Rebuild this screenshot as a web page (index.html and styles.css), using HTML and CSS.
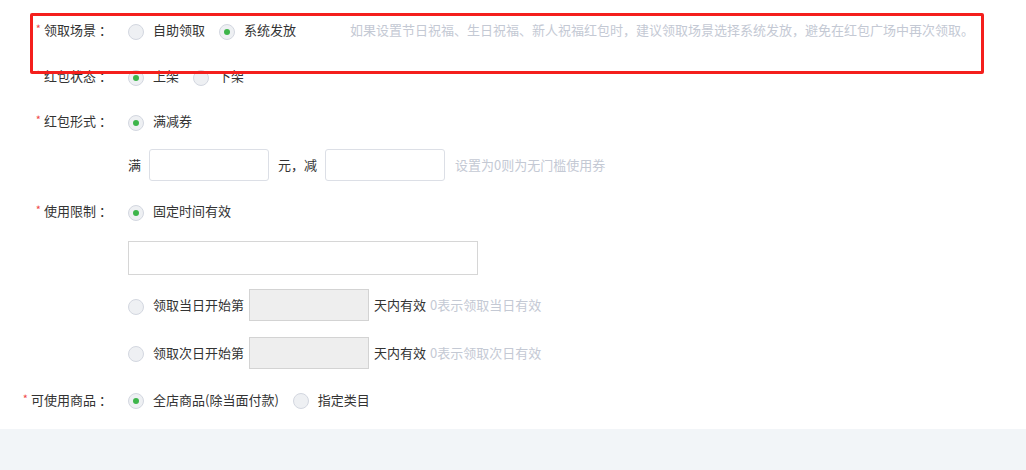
FILE: index.html
```html
<!DOCTYPE html>
<html lang="zh-CN">
<head>
<meta charset="utf-8">
<title>红包设置</title>
<link rel="stylesheet" href="styles.css">
</head>
<body>
<div class="page">
  <form class="form">
    <div class="row r1">
      <label class="label"><span class="req">*</span>领取场景<span class="colon">：</span></label>
      <div class="ctrl">
        <span class="radio"></span><span class="opt">自助领取</span>
        <span class="radio on"></span><span class="opt">系统发放</span>
        <span class="hint hint-wide">如果设置节日祝福、生日祝福、新人祝福红包时，建议领取场景选择系统发放，避免在红包广场中再次领取。</span>
      </div>
    </div>
    <div class="row r2">
      <label class="label"><span class="req">*</span>红包状态<span class="colon">：</span></label>
      <div class="ctrl">
        <span class="radio on"></span><span class="opt">上架</span>
        <span class="radio"></span><span class="opt">下架</span>
      </div>
    </div>
    <div class="row r3">
      <label class="label"><span class="req">*</span>红包形式<span class="colon">：</span></label>
      <div class="ctrl">
        <span class="radio on"></span><span class="opt">满减券</span>
      </div>
    </div>
    <div class="row r4">
      <span class="label"></span>
      <div class="ctrl">
        <span class="txt">满</span>
        <span class="input small"></span>
        <span class="txt mid">元，减</span>
        <span class="input small"></span>
        <span class="hint hint-after">设置为0则为无门槛使用券</span>
      </div>
    </div>
    <div class="row r5">
      <label class="label"><span class="req">*</span>使用限制<span class="colon">：</span></label>
      <div class="ctrl">
        <span class="radio on"></span><span class="opt">固定时间有效</span>
      </div>
    </div>
    <div class="row r6">
      <span class="label"></span>
      <div class="ctrl">
        <span class="input wide"></span>
      </div>
    </div>
    <div class="row r7">
      <span class="label"></span>
      <div class="ctrl">
        <span class="radio"></span><span class="opt tight">领取当日开始第</span>
        <span class="input grey"></span>
        <span class="txt after">天内有效</span>
        <span class="hint">0表示领取当日有效</span>
      </div>
    </div>
    <div class="row r8">
      <span class="label"></span>
      <div class="ctrl">
        <span class="radio"></span><span class="opt tight">领取次日开始第</span>
        <span class="input grey"></span>
        <span class="txt after">天内有效</span>
        <span class="hint">0表示领取次日有效</span>
      </div>
    </div>
    <div class="row r9">
      <label class="label"><span class="req">*</span>可使用商品<span class="colon">：</span></label>
      <div class="ctrl">
        <span class="radio on"></span><span class="opt">全店商品(除当面付款)</span>
        <span class="radio"></span><span class="opt">指定类目</span>
      </div>
    </div>
  </form>
  <div class="footer"></div>
  <div class="highlight"></div>
</div>
</body>
</html>
```
FILE: styles.css
```css
* { box-sizing: border-box; }
html, body { margin: 0; padding: 0; }
body {
  font-family: "Noto Sans CJK SC", "Microsoft YaHei", "Noto Sans", sans-serif;
  font-size: 13px;
  color: #333;
  background: #fff;
  width: 1026px;
  height: 470px;
  overflow: hidden;
}
.page { position: relative; width: 1026px; height: 470px; display: flex; flex-direction: column; }
.form { padding-top: 7px; padding-bottom: 6px; }
.row { display: flex; align-items: center; height: 46px; }
.r3, .r4 { height: 44px; }
.r5, .r7 { height: 48px; }
.r8, .r9 { height: 47px; }
.label {
  width: 112px;
  flex: none;
  text-align: right;
  line-height: 20px;
  white-space: nowrap;
  color: #333;
}
.colon { margin-left: 3px; }
.req { color: #f04848; font-size: 11px; margin-right: 3px; position: relative; top: -2px; }
.ctrl { display: flex; align-items: center; margin-left: 16px; white-space: nowrap; line-height: 20px; }
.radio {
  width: 16px; height: 16px; flex: none;
  border-radius: 50%;
  border: 1px solid #d3d7e0;
  background: #eef0f3;
  margin-right: 9px;
  margin-top: 3px;
  display: flex; align-items: center; justify-content: center;
}
.radio.on::after {
  content: ""; width: 6px; height: 6px; border-radius: 50%; background: #3db54a;
}
.opt { margin-right: 14px; }
.opt.tight { margin-right: 5px; }
.txt { color: #333; }
.txt.mid { margin: 0 0 0 9px; }
.txt.after { margin: 0 4px 0 5px; }
.input {
  display: inline-block; flex: none;
  border: 1px solid #dcdfe6;
  background: #fff;
}
.input.small { width: 120px; height: 32px; border-radius: 3px; margin-left: 8px; }
.input.wide { width: 350px; height: 34px; border-color: #d6d6d6; }
.input.grey { width: 120px; height: 32px; background: #eeeeee; border-color: #d3d3d3; }
.hint { color: #c4c9d4; }
.hint-wide { margin-left: 40px; }
.hint-after { margin-left: 10px; }
.footer { flex: 1; background: #f2f5f8; }
.highlight {
  position: absolute;
  left: 30px; top: 13px;
  width: 954px; height: 61px;
  border: 3px solid #f41f1c;
  border-radius: 2px;
  pointer-events: none;
}
```
